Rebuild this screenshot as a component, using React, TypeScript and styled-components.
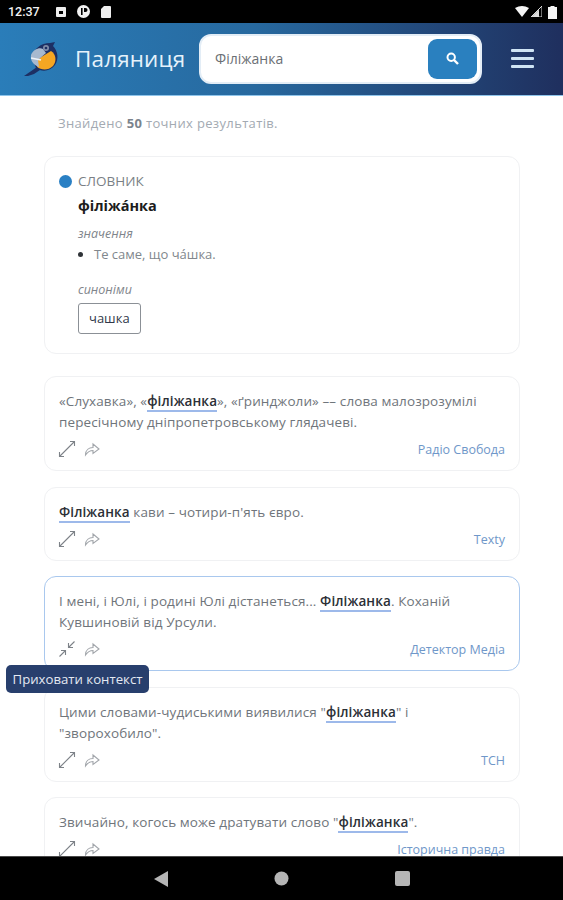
import React, { FC, ReactNode } from 'react';
import styled, { createGlobalStyle } from 'styled-components';

const GlobalStyle = createGlobalStyle`
  html, body {
    margin: 0;
    padding: 0;
    background: #fff;
    font-family: "Open Sans", "Noto Sans", sans-serif;
  }
`;

const Screen = styled.div`
  position: relative;
  width: 563px;
  height: 900px;
  display: flex;
  flex-direction: column;
  overflow: hidden;
  background: #fff;
`;

const StatusBar = styled.div`
  height: 23px;
  flex: none;
  background: #000;
  color: #f2f2f2;
  display: flex;
  align-items: center;
  padding: 0 6px 0 8px;
  box-sizing: border-box;
`;

const Clock = styled.span`
  font-family: Roboto, sans-serif;
  font-size: 12.5px;
  font-weight: 500;
  margin-right: 16px;
`;

const StatusIcons = styled.div`
  display: flex;
  align-items: center;
  gap: 11px;
`;

const StatusRight = styled.div`
  margin-left: auto;
  display: flex;
  align-items: center;
  gap: 2px;
`;

const Header = styled.header`
  height: 73px;
  flex: none;
  box-sizing: border-box;
  background: linear-gradient(90deg, #2a7db9 0%, #27699f 45%, #1f2f5e 100%);
  border-bottom: 1.5px solid #8ec4ea;
  display: flex;
  align-items: center;
  padding: 0 29px 1px 22px;
`;

const Brand = styled.div`
  display: flex;
  align-items: center;
  gap: 11px;
  width: 177px;
  flex: none;
`;

const BrandName = styled.span`
  color: #e6f2fb;
  font-size: 22.4px;
  line-height: 30px;
  letter-spacing: 0.2px;
`;

const SearchBox = styled.div`
  width: 283px;
  height: 50px;
  flex: none;
  box-sizing: border-box;
  background: #fff;
  border-radius: 12px;
  border: 2px solid #e3edf6;
  display: flex;
  align-items: center;
  justify-content: space-between;
  padding: 2px 3px 2px 14px;
`;

const SearchText = styled.span`
  color: #6b6f74;
  font-size: 14px;
`;

const SearchButton = styled.div`
  width: 49px;
  height: 40px;
  background: #2a80bf;
  border-radius: 9px;
  display: flex;
  align-items: center;
  justify-content: center;
`;

const Burger = styled.div`
  margin-left: auto;
  width: 23px;
  display: flex;
  flex-direction: column;
  gap: 5.5px;
`;

const BurgerLine = styled.span`
  display: block;
  height: 2.5px;
  border-radius: 1px;
  background: #cfe4f4;
`;

const Main = styled.main`
  flex: 1;
  min-height: 0;
  overflow: hidden;
  padding: 17px 43px 0 44px;
`;

const Summary = styled.p`
  margin: 0 0 23px 14px;
  font-size: 13px;
  line-height: 20px;
  color: #a3aab2;
  letter-spacing: 0.35px;

  b {
    font-weight: 700;
    color: #7b838c;
  }
`;

const Card = styled.article<{ $active?: boolean; $gap?: number }>`
  box-sizing: border-box;
  border: 1px solid ${p => (p.$active ? '#a9c8ee' : '#f0f1f3')};
  border-radius: 12px;
  padding: 14px 14px 9px;
  margin-bottom: ${p => p.$gap ?? 15}px;
  background: #fff;
`;

const DictCard = styled(Card)`
  height: 198px;
  padding: 14px 14px 0;
`;

const DictLabel = styled.div`
  display: flex;
  align-items: center;
  gap: 6px;
  color: #7a7f85;
  font-size: 13.5px;
  line-height: 20px;
`;

const Dot = styled.span`
  width: 13px;
  height: 13px;
  border-radius: 50%;
  background: #2a80c4;
`;

const DictBody = styled.div`
  padding-left: 19px;
`;

const Headword = styled.h2`
  margin: 5px 0 9px;
  font-size: 14.5px;
  line-height: 20px;
  font-weight: 700;
  color: #1c1c1c;
`;

const SectionLabel = styled.div`
  font-size: 12.5px;
  line-height: 18px;
  font-style: italic;
  color: #7f858b;
`;

const Meanings = styled.ul`
  margin: 1px 0 17px;
  padding: 0 0 0 16px;
  font-size: 13px;
  line-height: 20px;
  color: #81878d;

  li::marker {
    color: #2f3338;
  }
`;

const SynonymTag = styled.span`
  display: inline-block;
  margin-top: 4px;
  box-sizing: border-box;
  height: 31px;
  padding: 0 10px;
  border: 1px solid #8b9096;
  border-radius: 3px;
  font-size: 13px;
  line-height: 29px;
  color: #30384a;
`;

const Quote = styled.p`
  margin: 0;
  font-size: 13.5px;
  line-height: 21px;
  color: #6f757b;
  letter-spacing: 0.1px;
`;

const Hit = styled.span`
  font-weight: 600;
  color: #2b2f36;
  border-bottom: 2px solid #9db9ea;
`;

const CardFooter = styled.div`
  display: flex;
  align-items: center;
  justify-content: space-between;
  margin-top: 4px;
  height: 24px;
`;

const Actions = styled.div`
  display: flex;
  align-items: center;
  gap: 8px;
  margin-left: -1px;
`;

const Source = styled.span`
  font-size: 12.5px;
  color: #6f97c9;
`;

const Tooltip = styled.div`
  position: absolute;
  left: 6px;
  top: 665px;
  width: 143px;
  height: 28px;
  box-sizing: border-box;
  background: #283f6d;
  border-radius: 5px;
  color: #e4e9f2;
  font-size: 13.2px;
  line-height: 28px;
  text-align: center;
  white-space: nowrap;
`;

const NavBar = styled.nav`
  height: 44px;
  flex: none;
  box-sizing: border-box;
  background: #000;
  border-top: 1px solid #4a4a4a;
  display: flex;
  align-items: center;
  justify-content: center;
  gap: 106px;
  padding-left: 1px;
`;

const Logo: FC = () => (
  <svg width="42" height="40" viewBox="0 0 42 40">
    <path d="M10 19 C11 10 19 4 28 4 L33 3 L31 7 C36 12 37 20 33 26 C28 33 19 33 14 29 Z" fill="#1d2f63" />
    <path d="M16 20 L29 12 C34 15 35 22 31 27 C26 32 19 31 15 28 Z" fill="#f5a623" />
    <path d="M9 16 C11 11 17 8 21 10 L24 14 L16 21 L17 28 C12 26 8 22 9 16 Z" fill="#a7b9cf" />
    <path d="M9 19 L19 21" stroke="#eef3f8" strokeWidth="1.6" />
    <circle cx="24" cy="9" r="3" fill="#7f8da8" />
    <circle cx="24" cy="9" r="1.3" fill="#1d2f63" />
    <path d="M15 28 L2 37 L6 37 L12 35 L18 31 Z" fill="#1d2f63" />
  </svg>
);

const ExpandIcon: FC = () => (
  <svg width="18" height="18" viewBox="0 0 18 18" fill="none" stroke="#7d8288" strokeWidth="1.1">
    <path d="M1.5 16.5 L16.5 1.5 M12 1.5 H16.5 V6 M1.5 12 V16.5 H6" />
  </svg>
);

const CollapseIcon: FC = () => (
  <svg width="18" height="18" viewBox="0 0 18 18" fill="none" stroke="#7d8288" strokeWidth="1.1">
    <path d="M1.5 16.5 L7.5 10.5 M3 10.5 H7.5 V15 M16.5 1.5 L10.5 7.5 M10.5 3 V7.5 H15" />
  </svg>
);

const ShareIcon: FC = () => (
  <svg width="16" height="16" viewBox="0 0 16 16" fill="none" stroke="#a2a6ab" strokeWidth="1.1">
    <path d="M1.5 14 C1.5 9 5 6.5 9 6.5 V3 L15 8 L9 12.5 V9.5 C6 9.5 3.5 11 1.5 14 Z" />
  </svg>
);

interface QuoteCardProps {
  source: string;
  active?: boolean;
  gap?: number;
  children: ReactNode;
}

const QuoteCard: FC<QuoteCardProps> = ({ source, active, gap, children }) => (
  <Card $active={active} $gap={gap}>
    <Quote>{children}</Quote>
    <CardFooter>
      <Actions>
        {active ? <CollapseIcon /> : <ExpandIcon />}
        <ShareIcon />
      </Actions>
      <Source>{source}</Source>
    </CardFooter>
  </Card>
);

const App: FC = () => (
  <Screen>
    <GlobalStyle />
    <StatusBar>
      <Clock>12:37</Clock>
      <StatusIcons>
        <svg width="10" height="10" viewBox="0 0 10 10">
          <path d="M0 1 Q0 0 1 0 H9 Q10 0 10 1 V9 Q10 10 9 10 H1 Q0 10 0 9 Z" fill="#eee" />
          <rect x="3" y="4" width="4" height="3" fill="#000" />
        </svg>
        <svg width="13" height="13" viewBox="0 0 13 13">
          <circle cx="6.5" cy="6.5" r="6.5" fill="#f2f2f2" />
          <rect x="4" y="3" width="1.6" height="7" fill="#000" />
          <path d="M7 3 H8.5 A2 2 0 0 1 8.5 7 H7 Z" fill="#000" />
        </svg>
        <svg width="10" height="12" viewBox="0 0 10 12">
          <path d="M3 0 H9 Q10 0 10 1 V11 Q10 12 9 12 H1 Q0 12 0 11 V3 Z" fill="#eee" />
        </svg>
      </StatusIcons>
      <StatusRight>
        <svg width="14" height="11" viewBox="0 0 14 11">
          <path d="M0 2 Q7 -2 14 2 L7 11 Z" fill="#f5f5f5" />
        </svg>
        <svg width="11" height="11" viewBox="0 0 11 11">
          <path d="M11 0 V11 H0 Z" fill="none" stroke="#ddd" strokeWidth="1" />
          <path d="M8 3.5 V11 H0.5 Z" fill="#ddd" />
        </svg>
        <svg width="9" height="14" viewBox="0 0 9 14" style={{ marginLeft: 4 }}>
          <path d="M2.5 1 H6.5 V2 H9 V14 H0 V2 H2.5 Z" fill="#f5f5f5" />
        </svg>
      </StatusRight>
    </StatusBar>

    <Header>
      <Brand>
        <Logo />
        <BrandName>Паляниця</BrandName>
      </Brand>
      <SearchBox>
        <SearchText>Філіжанка</SearchText>
        <SearchButton>
          <svg width="13" height="13" viewBox="0 0 13 13" fill="none" stroke="#fff">
            <circle cx="5.2" cy="5.2" r="3.7" strokeWidth="2" />
            <path d="M8 8 L12 12" strokeWidth="2.4" />
          </svg>
        </SearchButton>
      </SearchBox>
      <Burger>
        <BurgerLine />
        <BurgerLine />
        <BurgerLine />
      </Burger>
    </Header>

    <Main>
      <Summary>
        Знайдено <b>50</b> точних результатів.
      </Summary>

      <DictCard $gap={22}>
        <DictLabel>
          <Dot />
          СЛОВНИК
        </DictLabel>
        <DictBody>
          <Headword>філіжáнка</Headword>
          <SectionLabel>значення</SectionLabel>
          <Meanings>
            <li>Те саме, що чáшка.</li>
          </Meanings>
          <SectionLabel>синоніми</SectionLabel>
          <SynonymTag>чашка</SynonymTag>
        </DictBody>
      </DictCard>

      <QuoteCard source="Радіо Свобода" gap={16}>
        «Слухавка», «<Hit>філіжанка</Hit>», «ґринджоли» –– слова малозрозумілі пересічному
        дніпропетровському глядачеві.
      </QuoteCard>
      <QuoteCard source="Texty">
        <Hit>Філіжанка</Hit> кави – чотири-п'ять євро.
      </QuoteCard>
      <QuoteCard source="Детектор Медіа" active gap={16}>
        І мені, і Юлі, і родині Юлі дістанеться... <Hit>Філіжанка</Hit>. Коханій Кувшиновій від
        Урсули.
      </QuoteCard>
      <QuoteCard source="ТСН">
        Цими словами-чудиськими виявилися "<Hit>філіжанка</Hit>" і "зворохобило".
      </QuoteCard>
      <QuoteCard source="Історична правда">
        Звичайно, когось може дратувати слово "<Hit>філіжанка</Hit>".
      </QuoteCard>
    </Main>

    <Tooltip>Приховати контекст</Tooltip>

    <NavBar>
      <svg width="14" height="16" viewBox="0 0 14 16">
        <path d="M14 0 V16 L0 8 Z" fill="#b5b5b5" />
      </svg>
      <svg width="15" height="15" viewBox="0 0 15 15">
        <circle cx="7.5" cy="7.5" r="7" fill="#b5b5b5" />
      </svg>
      <svg width="15" height="15" viewBox="0 0 15 15">
        <rect width="15" height="15" rx="2" fill="#b5b5b5" />
      </svg>
    </NavBar>
  </Screen>
);

export default App;
